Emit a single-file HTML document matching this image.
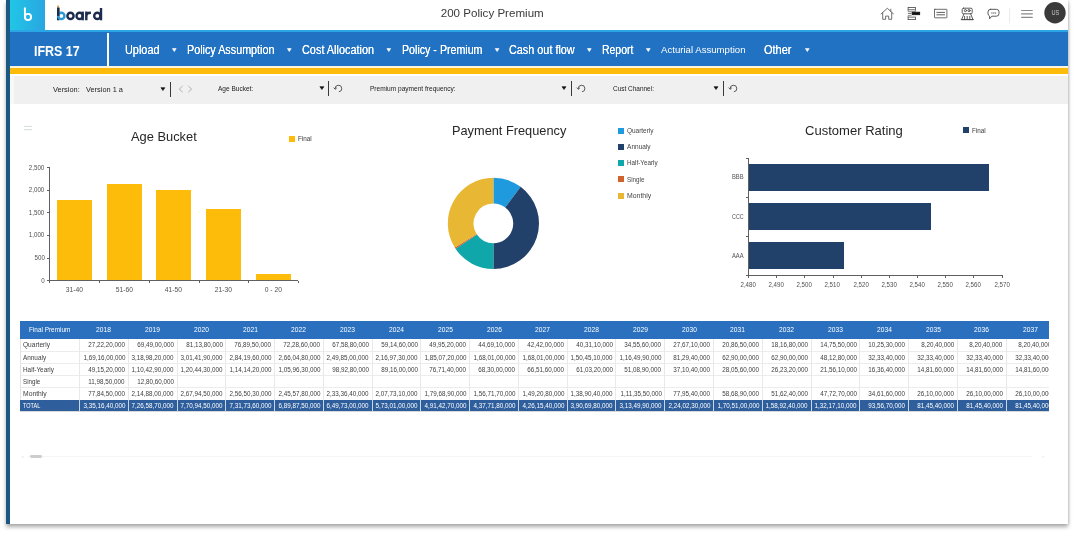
<!DOCTYPE html>
<html><head><meta charset="utf-8"><title>200 Policy Premium</title>
<style>
html,body{margin:0;padding:0;background:#fff;}
body{width:1074px;height:536px;overflow:hidden;position:relative;font-family:"Liberation Sans",sans-serif;}
.t{position:absolute;white-space:nowrap;display:block;}
.r{position:absolute;}
#card{position:absolute;left:6px;top:0;width:1062px;height:524px;background:#fff;box-shadow:0 3px 4px rgba(0,0,0,.33),1px 0 2px rgba(0,0,0,.10);}
svg{position:absolute;left:0;top:0;overflow:visible;}
</style></head><body>
<div id="card"></div>
<div id="page" style="position:absolute;left:0;top:0;width:1074px;height:536px;will-change:transform;">

<div class="r" style="left:6.2px;top:0px;width:3.7px;height:524px;background:#1c5982;"></div>
<div class="r" style="left:10px;top:0px;width:34.5px;height:30px;background:linear-gradient(90deg,#21c6e6,#29a6e1);"></div>
<div class="r" style="left:10px;top:29.5px;width:1058px;height:2.5px;background:#2aa5e6;"></div>
<div class="r" style="left:10px;top:32px;width:1058px;height:33.9px;background:#2272c3;"></div>
<div class="r" style="left:10px;top:66.2px;width:1058px;height:1.8px;background:#fdf6dc;"></div>
<div class="r" style="left:10px;top:67.8px;width:1058px;height:5.8px;background:#fdbb0c;"></div>
<div class="r" style="left:10px;top:75.5px;width:1058px;height:28.2px;background:#f8f8f8;"></div>
<div class="r" style="left:13.6px;top:75.5px;width:1054.4px;height:28.2px;background:#f0f0f0;"></div>
<div class="r" style="left:107px;top:33px;width:1.6px;height:33px;background:#fff;"></div>
<span class="t" style="left:442.26px;top:5.30px;font-size:11.3px;line-height:16px;color:#3a3a3a;transform:scaleX(1.0251);transform-origin:50% 50%;">200 Policy Premium</span>
<svg width="1074" height="536" viewBox="0 0 1074 536" fill="none" stroke-width="2.4" stroke-linecap="butt">
<g id="logo" stroke="#1d2b4d">
<path d="M58.2 7.6 V20.3"/>
<circle cx="61.3" cy="15.9" r="3.15" stroke="#2a9ad6"/>
<path d="M58.2 7.6 V15.9"/>
<circle cx="70.5" cy="15.9" r="3.1"/>
<circle cx="79.6" cy="15.9" r="3.1"/><path d="M82.7 11.6 V20.3"/>
<path d="M86.3 11.6 V20.3 M86.3 17.5 C86.3 13.2 87.4 12.8 90.9 12.8"/>
<circle cx="97.3" cy="15.9" r="3.1"/><path d="M101.0 8.0 V20.3"/>
</g>
<circle cx="58.1" cy="6.2" r="1.0" fill="#e9a23b" stroke="none"/>
<g id="tileb" stroke="#fff" stroke-width="1.9" stroke-linecap="round">
<path d="M24.9 8.2 V17"/>
<circle cx="28" cy="17" r="3.1"/>
</g>
</svg>
<svg width="1074" height="536" viewBox="0 0 1074 536" fill="none" stroke="#4a4a4a" stroke-width="0.8" stroke-linejoin="round" stroke-linecap="round">
<!-- home -->
<path d="M881.1 13.9 L887.3 8.3 L893.4 13.8 M882.7 12.8 V19.3 H885.6 V16.1 H888.7 V19.3 H891.7 V12.6 M890.8 11.2 V9.2"/>
<!-- hierarchy -->
<g stroke="#444" stroke-width="0.8" stroke-linejoin="miter" stroke-linecap="butt">
<rect x="908.1" y="7.4" width="7.4" height="2.4"/>
<path d="M908.1 9.8 V11.6 H915.5 V9.8" stroke="#777"/>
<rect x="908.1" y="17.1" width="7.4" height="2.5"/>
<path d="M908.1 17.1 V15.4 H911.6" stroke="#777"/>
<path d="M908 13.4 H911.6"/>
<rect x="912.2" y="12.2" width="7.5" height="2.5" fill="#111" stroke="#111"/>
</g>
<!-- card -->
<rect x="934.5" y="9.3" width="12.4" height="8.5" rx="0.4"/>
<path d="M936.8 12.4 H944.6 M936.8 14.8 H944.6" stroke-width="0.9"/>
<!-- people -->
<g stroke-width="0.9">
<rect x="962.2" y="8.2" width="10" height="5.6" rx="1.2"/>
<circle cx="965.4" cy="10.6" r="1.1"/><circle cx="969" cy="10.6" r="1.1"/>
<path d="M964 13.8 L961.6 19.6 H973 L970.6 13.8 M961.2 19.6 H973.4 M964.6 19.4 V16.4 M967.2 19.4 V16.4 M969.8 19.4 V16.4"/>
</g>
<!-- chat -->
<path d="M990.6 9.3 H996.4 Q999 9.3 999 11.8 V13.6 Q999 16.2 996.4 16.2 H991.8 L989.6 18.8 V16 Q988 15.4 988 13.6 V11.8 Q988 9.3 990.6 9.3 Z" stroke-width="0.9"/>
<path d="M991.6 13 H992.2 M993.4 13 H994 M995.2 13 H995.8" stroke-width="0.9"/>
<!-- sep -->
<path d="M1009.6 8.5 V23" stroke="#e4e4e4"/>
<!-- hamburger -->
<path d="M1021.6 10.5 H1032.3 M1021.6 13.9 H1032.3 M1021.6 17.4 H1032.3" stroke="#8a8a8a" stroke-width="1.1"/>
<circle cx="1055" cy="12.8" r="10.7" fill="#3a3a3a" stroke="none"/>
</svg>
<span class="t" style="left:1050.72px;top:8.30px;font-size:6.3px;line-height:10px;color:#c8c8c8;transform:scaleX(0.8912);transform-origin:50% 50%;">US</span>
<span class="t" style="left:34.20px;top:41.70px;font-size:13.8px;line-height:19px;color:#fff;font-weight:bold;transform:scaleX(0.9009);transform-origin:0 50%;">IFRS 17</span>
<span class="t" style="left:125.00px;top:41.80px;font-size:12px;line-height:16px;color:#fff;transform:scaleX(0.9072);transform-origin:0 50%;text-shadow:0 0 .5px #fff;">Upload</span>
<svg width="1074" height="536" viewBox="0 0 1074 536"><path fill="#fff" stroke="#fff" stroke-width="0.6" stroke-linejoin="round" d="M172.40 48.60 H176.20 L174.30 51.60 Z"/></svg>
<span class="t" style="left:187.00px;top:41.80px;font-size:12px;line-height:16px;color:#fff;transform:scaleX(0.8986);transform-origin:0 50%;text-shadow:0 0 .5px #fff;">Policy Assumption</span>
<svg width="1074" height="536" viewBox="0 0 1074 536"><path fill="#fff" stroke="#fff" stroke-width="0.6" stroke-linejoin="round" d="M287.40 48.60 H291.20 L289.30 51.60 Z"/></svg>
<span class="t" style="left:301.60px;top:41.80px;font-size:12px;line-height:16px;color:#fff;transform:scaleX(0.9083);transform-origin:0 50%;text-shadow:0 0 .5px #fff;">Cost Allocation</span>
<svg width="1074" height="536" viewBox="0 0 1074 536"><path fill="#fff" stroke="#fff" stroke-width="0.6" stroke-linejoin="round" d="M386.90 48.60 H390.70 L388.80 51.60 Z"/></svg>
<span class="t" style="left:401.50px;top:41.80px;font-size:12px;line-height:16px;color:#fff;transform:scaleX(0.8877);transform-origin:0 50%;text-shadow:0 0 .5px #fff;">Policy - Premium</span>
<svg width="1074" height="536" viewBox="0 0 1074 536"><path fill="#fff" stroke="#fff" stroke-width="0.6" stroke-linejoin="round" d="M495.20 48.60 H499.00 L497.10 51.60 Z"/></svg>
<span class="t" style="left:509.00px;top:41.80px;font-size:12px;line-height:16px;color:#fff;transform:scaleX(0.9037);transform-origin:0 50%;text-shadow:0 0 .5px #fff;">Cash out flow</span>
<svg width="1074" height="536" viewBox="0 0 1074 536"><path fill="#fff" stroke="#fff" stroke-width="0.6" stroke-linejoin="round" d="M587.40 48.60 H591.20 L589.30 51.60 Z"/></svg>
<span class="t" style="left:602.00px;top:41.80px;font-size:12px;line-height:16px;color:#fff;transform:scaleX(0.8718);transform-origin:0 50%;text-shadow:0 0 .5px #fff;">Report</span>
<svg width="1074" height="536" viewBox="0 0 1074 536"><path fill="#fff" stroke="#fff" stroke-width="0.6" stroke-linejoin="round" d="M646.40 48.60 H650.20 L648.30 51.60 Z"/></svg>
<span class="t" style="left:660.50px;top:43.00px;font-size:9.8px;line-height:14px;color:#fff;transform:scaleX(0.9819);transform-origin:0 50%;">Acturial Assumption</span>
<span class="t" style="left:764.40px;top:41.80px;font-size:12px;line-height:16px;color:#fff;transform:scaleX(0.9130);transform-origin:0 50%;text-shadow:0 0 .5px #fff;">Other</span>
<svg width="1074" height="536" viewBox="0 0 1074 536"><path fill="#fff" stroke="#fff" stroke-width="0.6" stroke-linejoin="round" d="M805.40 48.60 H809.20 L807.30 51.60 Z"/></svg>
<span class="t" style="left:52.80px;top:83.70px;font-size:7.8px;line-height:11px;color:#222;transform:scaleX(0.9474);transform-origin:0 50%;">Version:</span>
<span class="t" style="left:86.00px;top:83.70px;font-size:7.8px;line-height:11px;color:#222;transform:scaleX(0.9455);transform-origin:0 50%;">Version 1 a</span>
<span class="t" style="left:218.00px;top:83.60px;font-size:6.9px;line-height:10px;color:#222;transform:scaleX(0.9461);transform-origin:0 50%;">Age Bucket:</span>
<span class="t" style="left:370.00px;top:83.60px;font-size:6.9px;line-height:10px;color:#222;transform:scaleX(0.9509);transform-origin:0 50%;">Premium payment frequency:</span>
<span class="t" style="left:612.50px;top:83.60px;font-size:6.9px;line-height:10px;color:#222;transform:scaleX(0.9377);transform-origin:0 50%;">Cust Channel:</span>
<svg width="1074" height="536" viewBox="0 0 1074 536"><path fill="#111" stroke="#111" stroke-width="0.6" stroke-linejoin="round" d="M160.90 87.65 H164.90 L162.90 90.55 Z"/></svg>
<div class="r" style="left:170.15px;top:81.5px;width:0.9px;height:15.4px;background:#3a3a3a;"></div>
<svg width="1074" height="536" viewBox="0 0 1074 536"><path fill="#111" stroke="#111" stroke-width="0.6" stroke-linejoin="round" d="M319.90 86.65 H323.90 L321.90 89.55 Z"/></svg>
<div class="r" style="left:328.25px;top:80.5px;width:0.9px;height:15.4px;background:#3a3a3a;"></div>
<svg width="1074" height="536" viewBox="0 0 1074 536"><path fill="#111" stroke="#111" stroke-width="0.6" stroke-linejoin="round" d="M562.00 86.65 H566.00 L564.00 89.55 Z"/></svg>
<div class="r" style="left:571.05px;top:80.5px;width:0.9px;height:15.4px;background:#3a3a3a;"></div>
<svg width="1074" height="536" viewBox="0 0 1074 536"><path fill="#111" stroke="#111" stroke-width="0.6" stroke-linejoin="round" d="M714.00 86.65 H718.00 L716.00 89.55 Z"/></svg>
<div class="r" style="left:722.65px;top:80.5px;width:0.9px;height:15.4px;background:#3a3a3a;"></div>
<svg width="1074" height="536" viewBox="0 0 1074 536" fill="none" stroke="#a0a0a0" stroke-width="0.8"><path d="M182.6 86 L179.3 89.1 L182.6 92.2 M188.3 86 L191.6 89.1 L188.3 92.2"/></svg>
<svg width="1074" height="536" viewBox="0 0 1074 536" fill="none" stroke="#333" stroke-width="0.8"><path d="M335.2 88.8 A3.3 3.3 0 1 1 338.9 91.8"/><path d="M333.7 87.6 L335.2 89.3 L336.9 87.7"/></svg>
<svg width="1074" height="536" viewBox="0 0 1074 536" fill="none" stroke="#333" stroke-width="0.8"><path d="M578.3 88.8 A3.3 3.3 0 1 1 582.0 91.8"/><path d="M576.8 87.6 L578.3 89.3 L580.0 87.7"/></svg>
<svg width="1074" height="536" viewBox="0 0 1074 536" fill="none" stroke="#333" stroke-width="0.8"><path d="M730.2 88.8 A3.3 3.3 0 1 1 733.9 91.8"/><path d="M728.7 87.6 L730.2 89.3 L731.9 87.7"/></svg>
<svg width="1074" height="536" viewBox="0 0 1074 536" fill="none" stroke="#cdd8d5" stroke-width="0.9"><path d="M24.2 126.4H32.2M24.2 129.7H32.2"/></svg>
<span class="t" style="left:131.20px;top:128.20px;font-size:13.2px;line-height:18px;color:#262626;transform:scaleX(0.9747);transform-origin:0 50%;">Age Bucket</span>
<div class="r" style="left:288.5px;top:135.5px;width:6.1px;height:6.0px;background:#fdbb0c;"></div>
<span class="t" style="left:297.70px;top:133.80px;font-size:6.4px;line-height:10px;color:#383838;transform:scaleX(0.9876);transform-origin:0 50%;">Final</span>
<div class="r" style="left:49.2px;top:167.7px;width:0.8px;height:112.90000000000003px;background:#606060;"></div>
<div class="r" style="left:49.2px;top:280.20000000000005px;width:249.29999999999998px;height:0.8px;background:#606060;"></div>
<div class="r" style="left:47.0px;top:280.20000000000005px;width:2.6px;height:0.8px;background:#606060;"></div>
<span class="t" style="left:40.98px;top:275.60px;font-size:6.5px;line-height:10px;color:#505050;transform:scaleX(0.9500);transform-origin:100% 50%;">0</span>
<div class="r" style="left:47.0px;top:257.62000000000006px;width:2.6px;height:0.8px;background:#606060;"></div>
<span class="t" style="left:33.75px;top:253.02px;font-size:6.5px;line-height:10px;color:#505050;transform:scaleX(0.9500);transform-origin:100% 50%;">500</span>
<div class="r" style="left:47.0px;top:235.04px;width:2.6px;height:0.8px;background:#606060;"></div>
<span class="t" style="left:28.33px;top:230.44px;font-size:6.5px;line-height:10px;color:#505050;transform:scaleX(0.9500);transform-origin:100% 50%;">1,000</span>
<div class="r" style="left:47.0px;top:212.46px;width:2.6px;height:0.8px;background:#606060;"></div>
<span class="t" style="left:28.33px;top:207.86px;font-size:6.5px;line-height:10px;color:#505050;transform:scaleX(0.9500);transform-origin:100% 50%;">1,500</span>
<div class="r" style="left:47.0px;top:189.88px;width:2.6px;height:0.8px;background:#606060;"></div>
<span class="t" style="left:28.33px;top:185.28px;font-size:6.5px;line-height:10px;color:#505050;transform:scaleX(0.9500);transform-origin:100% 50%;">2,000</span>
<div class="r" style="left:47.0px;top:167.29999999999998px;width:2.6px;height:0.8px;background:#606060;"></div>
<span class="t" style="left:28.33px;top:162.70px;font-size:6.5px;line-height:10px;color:#505050;transform:scaleX(0.9500);transform-origin:100% 50%;">2,500</span>
<div class="r" style="left:56.6px;top:199.9px;width:35.199999999999996px;height:80.40000000000002px;background:#fdbb0a;"></div>
<span class="t" style="left:65.69px;top:285.10px;font-size:6.5px;line-height:10px;color:#505050;transform:scaleX(1.0400);transform-origin:50% 50%;">31-40</span>
<div class="r" style="left:106.6px;top:184.0px;width:35.20000000000002px;height:96.30000000000003px;background:#fdbb0a;"></div>
<span class="t" style="left:115.69px;top:285.10px;font-size:6.5px;line-height:10px;color:#505050;transform:scaleX(1.0400);transform-origin:50% 50%;">51-60</span>
<div class="r" style="left:156.2px;top:190.1px;width:35.10000000000002px;height:90.20000000000003px;background:#fdbb0a;"></div>
<span class="t" style="left:165.24px;top:285.10px;font-size:6.5px;line-height:10px;color:#505050;transform:scaleX(1.0400);transform-origin:50% 50%;">41-50</span>
<div class="r" style="left:205.8px;top:208.9px;width:35.19999999999999px;height:71.40000000000002px;background:#fdbb0a;"></div>
<span class="t" style="left:214.89px;top:285.10px;font-size:6.5px;line-height:10px;color:#505050;transform:scaleX(1.0400);transform-origin:50% 50%;">21-30</span>
<div class="r" style="left:255.8px;top:273.9px;width:34.80000000000001px;height:6.400000000000046px;background:#fdbb0a;"></div>
<span class="t" style="left:264.69px;top:285.10px;font-size:6.5px;line-height:10px;color:#505050;transform:scaleX(1.0400);transform-origin:50% 50%;">0 - 20</span>
<div class="r" style="left:49.2px;top:280.6px;width:0.8px;height:2.4px;background:#606060;"></div>
<div class="r" style="left:98.97999999999999px;top:280.6px;width:0.8px;height:2.4px;background:#606060;"></div>
<div class="r" style="left:148.76px;top:280.6px;width:0.8px;height:2.4px;background:#606060;"></div>
<div class="r" style="left:198.54px;top:280.6px;width:0.8px;height:2.4px;background:#606060;"></div>
<div class="r" style="left:248.32px;top:280.6px;width:0.8px;height:2.4px;background:#606060;"></div>
<div class="r" style="left:298.1px;top:280.6px;width:0.8px;height:2.4px;background:#606060;"></div>
<span class="t" style="left:452.00px;top:122.10px;font-size:13.2px;line-height:18px;color:#262626;transform:scaleX(0.9685);transform-origin:0 50%;">Payment Frequency</span>
<svg width="1074" height="536" viewBox="0 0 1074 536">
<path fill="#1f9ade" d="M493.40 177.80 A45.6 45.6 0 0 1 520.65 186.84 L505.23 207.52 A19.8 19.8 0 0 0 493.40 203.60 Z"/>
<path fill="#21406a" d="M520.65 186.84 A45.6 45.6 0 0 1 493.40 269.00 L493.40 243.20 A19.8 19.8 0 0 0 505.23 207.52 Z"/>
<path fill="#0fa7a9" d="M493.40 269.00 A45.6 45.6 0 0 1 455.51 248.77 L476.95 234.41 A19.8 19.8 0 0 0 493.40 243.20 Z"/>
<path fill="#d0622c" d="M455.51 248.77 A45.6 45.6 0 0 1 454.73 247.56 L476.61 233.89 A19.8 19.8 0 0 0 476.95 234.41 Z"/>
<path fill="#e8b733" d="M454.73 247.56 A45.6 45.6 0 0 1 493.40 177.80 L493.40 203.60 A19.8 19.8 0 0 0 476.61 233.89 Z"/>
</svg>
<div class="r" style="left:618.4px;top:127.6px;width:6.1px;height:6.0px;background:#1f9ade;"></div>
<span class="t" style="left:627.10px;top:125.70px;font-size:6.5px;line-height:10px;color:#444;transform:scaleX(0.9914);transform-origin:0 50%;">Quarterly</span>
<div class="r" style="left:618.4px;top:143.7px;width:6.1px;height:6.0px;background:#21406a;"></div>
<span class="t" style="left:627.10px;top:141.80px;font-size:6.5px;line-height:10px;color:#444;">Annualy</span>
<div class="r" style="left:618.4px;top:160.0px;width:6.1px;height:6.0px;background:#0fa7a9;"></div>
<span class="t" style="left:627.10px;top:158.10px;font-size:6.5px;line-height:10px;color:#444;transform:scaleX(0.9698);transform-origin:0 50%;">Half-Yearly</span>
<div class="r" style="left:618.4px;top:176.4px;width:6.1px;height:6.0px;background:#d0622c;"></div>
<span class="t" style="left:627.10px;top:174.50px;font-size:6.5px;line-height:10px;color:#444;transform:scaleX(0.9630);transform-origin:0 50%;">Single</span>
<div class="r" style="left:618.4px;top:192.7px;width:6.1px;height:6.0px;background:#e8b733;"></div>
<span class="t" style="left:627.10px;top:190.80px;font-size:6.5px;line-height:10px;color:#444;transform:scaleX(1.0589);transform-origin:0 50%;">Monthly</span>
<span class="t" style="left:804.90px;top:121.70px;font-size:13.2px;line-height:18px;color:#262626;transform:scaleX(0.9885);transform-origin:0 50%;">Customer Rating</span>
<div class="r" style="left:963.1px;top:127.4px;width:5.9px;height:5.8px;background:#21406a;"></div>
<span class="t" style="left:971.80px;top:125.60px;font-size:6.4px;line-height:10px;color:#383838;transform:scaleX(0.9804);transform-origin:0 50%;">Final</span>
<div class="r" style="left:748.0px;top:158.1px;width:0.8px;height:117.20000000000002px;background:#606060;"></div>
<div class="r" style="left:748.0px;top:274.9px;width:253.89999999999998px;height:0.8px;background:#606060;"></div>
<div class="r" style="left:748.8px;top:163.5px;width:240.6px;height:27.099999999999994px;background:#21406a;"></div>
<span class="t" style="left:730.59px;top:172.35px;font-size:6.3px;line-height:10px;color:#505050;transform:scaleX(0.9202);transform-origin:100% 50%;">BBB</span>
<div class="r" style="left:748.8px;top:202.8px;width:181.80000000000004px;height:27.399999999999977px;background:#21406a;"></div>
<span class="t" style="left:729.55px;top:211.80px;font-size:6.3px;line-height:10px;color:#505050;transform:scaleX(0.8499);transform-origin:100% 50%;">CCC</span>
<div class="r" style="left:748.8px;top:242px;width:95.40000000000006px;height:27.100000000000023px;background:#21406a;"></div>
<span class="t" style="left:730.59px;top:250.85px;font-size:6.3px;line-height:10px;color:#505050;transform:scaleX(0.9202);transform-origin:100% 50%;">AAA</span>
<div class="r" style="left:746.0px;top:157.7px;width:2.4px;height:0.8px;background:#606060;"></div>
<div class="r" style="left:746.0px;top:196.6px;width:2.4px;height:0.8px;background:#606060;"></div>
<div class="r" style="left:746.0px;top:235.6px;width:2.4px;height:0.8px;background:#606060;"></div>
<div class="r" style="left:746.0px;top:274.90000000000003px;width:2.4px;height:0.8px;background:#606060;"></div>
<div class="r" style="left:748.0px;top:275.3px;width:0.8px;height:2.4px;background:#606060;"></div>
<span class="t" style="left:739.97px;top:279.50px;font-size:6.5px;line-height:10px;color:#505050;transform:scaleX(0.9406);transform-origin:50% 50%;">2,480</span>
<div class="r" style="left:776.17px;top:275.3px;width:0.8px;height:2.4px;background:#606060;"></div>
<span class="t" style="left:768.14px;top:279.50px;font-size:6.5px;line-height:10px;color:#505050;transform:scaleX(0.9406);transform-origin:50% 50%;">2,490</span>
<div class="r" style="left:804.34px;top:275.3px;width:0.8px;height:2.4px;background:#606060;"></div>
<span class="t" style="left:796.31px;top:279.50px;font-size:6.5px;line-height:10px;color:#505050;transform:scaleX(0.9406);transform-origin:50% 50%;">2,500</span>
<div class="r" style="left:832.51px;top:275.3px;width:0.8px;height:2.4px;background:#606060;"></div>
<span class="t" style="left:824.48px;top:279.50px;font-size:6.5px;line-height:10px;color:#505050;transform:scaleX(0.9406);transform-origin:50% 50%;">2,510</span>
<div class="r" style="left:860.68px;top:275.3px;width:0.8px;height:2.4px;background:#606060;"></div>
<span class="t" style="left:852.65px;top:279.50px;font-size:6.5px;line-height:10px;color:#505050;transform:scaleX(0.9406);transform-origin:50% 50%;">2,520</span>
<div class="r" style="left:888.85px;top:275.3px;width:0.8px;height:2.4px;background:#606060;"></div>
<span class="t" style="left:880.82px;top:279.50px;font-size:6.5px;line-height:10px;color:#505050;transform:scaleX(0.9406);transform-origin:50% 50%;">2,530</span>
<div class="r" style="left:917.02px;top:275.3px;width:0.8px;height:2.4px;background:#606060;"></div>
<span class="t" style="left:908.99px;top:279.50px;font-size:6.5px;line-height:10px;color:#505050;transform:scaleX(0.9406);transform-origin:50% 50%;">2,540</span>
<div class="r" style="left:945.1899999999999px;top:275.3px;width:0.8px;height:2.4px;background:#606060;"></div>
<span class="t" style="left:937.16px;top:279.50px;font-size:6.5px;line-height:10px;color:#505050;transform:scaleX(0.9406);transform-origin:50% 50%;">2,550</span>
<div class="r" style="left:973.36px;top:275.3px;width:0.8px;height:2.4px;background:#606060;"></div>
<span class="t" style="left:965.33px;top:279.50px;font-size:6.5px;line-height:10px;color:#505050;transform:scaleX(0.9406);transform-origin:50% 50%;">2,560</span>
<div class="r" style="left:1001.5300000000001px;top:275.3px;width:0.8px;height:2.4px;background:#606060;"></div>
<span class="t" style="left:993.50px;top:279.50px;font-size:6.5px;line-height:10px;color:#505050;transform:scaleX(0.9406);transform-origin:50% 50%;">2,570</span>
<div class="r" style="left:20.2px;top:320.5px;width:1029.1px;height:91.10000000000002px;overflow:hidden;">
<div class="r" style="left:0.00px;top:0.00px;width:1029.10px;height:18.40px;background:#2a70be;"></div>
<div class="r" style="left:0.00px;top:79.30px;width:1029.10px;height:11.80px;background:#2e5e9c;"></div>
<div class="r" style="left:0.00px;top:30.30px;width:1029.10px;height:0.80px;background:#ececec;"></div>
<div class="r" style="left:0.00px;top:42.50px;width:1029.10px;height:0.80px;background:#ececec;"></div>
<div class="r" style="left:0.00px;top:54.50px;width:1029.10px;height:0.80px;background:#ececec;"></div>
<div class="r" style="left:0.00px;top:66.60px;width:1029.10px;height:0.80px;background:#ececec;"></div>
<div class="r" style="left:0.00px;top:90.30px;width:1029.10px;height:0.80px;background:#d8d8d8;"></div>
<div class="r" style="left:58.80px;top:18.40px;width:0.80px;height:60.90px;background:#e9e9e9;"></div>
<div class="r" style="left:58.80px;top:79.30px;width:0.90px;height:11.80px;background:#c9d6e6;"></div>
<div class="r" style="left:107.57px;top:18.40px;width:0.80px;height:60.90px;background:#e9e9e9;"></div>
<div class="r" style="left:107.57px;top:79.30px;width:0.90px;height:11.80px;background:#c9d6e6;"></div>
<div class="r" style="left:156.34px;top:18.40px;width:0.80px;height:60.90px;background:#e9e9e9;"></div>
<div class="r" style="left:156.34px;top:79.30px;width:0.90px;height:11.80px;background:#c9d6e6;"></div>
<div class="r" style="left:205.11px;top:18.40px;width:0.80px;height:60.90px;background:#e9e9e9;"></div>
<div class="r" style="left:205.11px;top:79.30px;width:0.90px;height:11.80px;background:#c9d6e6;"></div>
<div class="r" style="left:253.88px;top:18.40px;width:0.80px;height:60.90px;background:#e9e9e9;"></div>
<div class="r" style="left:253.88px;top:79.30px;width:0.90px;height:11.80px;background:#c9d6e6;"></div>
<div class="r" style="left:302.65px;top:18.40px;width:0.80px;height:60.90px;background:#e9e9e9;"></div>
<div class="r" style="left:302.65px;top:79.30px;width:0.90px;height:11.80px;background:#c9d6e6;"></div>
<div class="r" style="left:351.42px;top:18.40px;width:0.80px;height:60.90px;background:#e9e9e9;"></div>
<div class="r" style="left:351.42px;top:79.30px;width:0.90px;height:11.80px;background:#c9d6e6;"></div>
<div class="r" style="left:400.19px;top:18.40px;width:0.80px;height:60.90px;background:#e9e9e9;"></div>
<div class="r" style="left:400.19px;top:79.30px;width:0.90px;height:11.80px;background:#c9d6e6;"></div>
<div class="r" style="left:448.96px;top:18.40px;width:0.80px;height:60.90px;background:#e9e9e9;"></div>
<div class="r" style="left:448.96px;top:79.30px;width:0.90px;height:11.80px;background:#c9d6e6;"></div>
<div class="r" style="left:497.73px;top:18.40px;width:0.80px;height:60.90px;background:#e9e9e9;"></div>
<div class="r" style="left:497.73px;top:79.30px;width:0.90px;height:11.80px;background:#c9d6e6;"></div>
<div class="r" style="left:546.50px;top:18.40px;width:0.80px;height:60.90px;background:#e9e9e9;"></div>
<div class="r" style="left:546.50px;top:79.30px;width:0.90px;height:11.80px;background:#c9d6e6;"></div>
<div class="r" style="left:595.27px;top:18.40px;width:0.80px;height:60.90px;background:#e9e9e9;"></div>
<div class="r" style="left:595.27px;top:79.30px;width:0.90px;height:11.80px;background:#c9d6e6;"></div>
<div class="r" style="left:644.04px;top:18.40px;width:0.80px;height:60.90px;background:#e9e9e9;"></div>
<div class="r" style="left:644.04px;top:79.30px;width:0.90px;height:11.80px;background:#c9d6e6;"></div>
<div class="r" style="left:692.81px;top:18.40px;width:0.80px;height:60.90px;background:#e9e9e9;"></div>
<div class="r" style="left:692.81px;top:79.30px;width:0.90px;height:11.80px;background:#c9d6e6;"></div>
<div class="r" style="left:741.58px;top:18.40px;width:0.80px;height:60.90px;background:#e9e9e9;"></div>
<div class="r" style="left:741.58px;top:79.30px;width:0.90px;height:11.80px;background:#c9d6e6;"></div>
<div class="r" style="left:790.35px;top:18.40px;width:0.80px;height:60.90px;background:#e9e9e9;"></div>
<div class="r" style="left:790.35px;top:79.30px;width:0.90px;height:11.80px;background:#c9d6e6;"></div>
<div class="r" style="left:839.12px;top:18.40px;width:0.80px;height:60.90px;background:#e9e9e9;"></div>
<div class="r" style="left:839.12px;top:79.30px;width:0.90px;height:11.80px;background:#c9d6e6;"></div>
<div class="r" style="left:887.89px;top:18.40px;width:0.80px;height:60.90px;background:#e9e9e9;"></div>
<div class="r" style="left:887.89px;top:79.30px;width:0.90px;height:11.80px;background:#c9d6e6;"></div>
<div class="r" style="left:936.66px;top:18.40px;width:0.80px;height:60.90px;background:#e9e9e9;"></div>
<div class="r" style="left:936.66px;top:79.30px;width:0.90px;height:11.80px;background:#c9d6e6;"></div>
<div class="r" style="left:985.43px;top:18.40px;width:0.80px;height:60.90px;background:#e9e9e9;"></div>
<div class="r" style="left:985.43px;top:79.30px;width:0.90px;height:11.80px;background:#c9d6e6;"></div>
<div class="r" style="left:0.00px;top:18.40px;width:0.80px;height:60.90px;background:#e3e3e3;"></div>
</div>
<div class="r" style="left:20.2px;top:320.5px;width:1029.1px;height:91.10000000000002px;overflow:hidden;">
<span class="t" style="left:8.90px;top:4.90px;font-size:6.7px;line-height:10px;color:#fff;transform:scaleX(0.9586);transform-origin:0 50%;">Final Premium</span>
<span class="t" style="left:76.23px;top:4.90px;font-size:6.7px;line-height:10px;color:#fff;transform:scaleX(0.9930);transform-origin:50% 50%;">2018</span>
<span class="t" style="left:125.00px;top:4.90px;font-size:6.7px;line-height:10px;color:#fff;transform:scaleX(0.9930);transform-origin:50% 50%;">2019</span>
<span class="t" style="left:173.77px;top:4.90px;font-size:6.7px;line-height:10px;color:#fff;transform:scaleX(0.9930);transform-origin:50% 50%;">2020</span>
<span class="t" style="left:222.54px;top:4.90px;font-size:6.7px;line-height:10px;color:#fff;transform:scaleX(0.9930);transform-origin:50% 50%;">2021</span>
<span class="t" style="left:271.31px;top:4.90px;font-size:6.7px;line-height:10px;color:#fff;transform:scaleX(0.9930);transform-origin:50% 50%;">2022</span>
<span class="t" style="left:320.08px;top:4.90px;font-size:6.7px;line-height:10px;color:#fff;transform:scaleX(0.9930);transform-origin:50% 50%;">2023</span>
<span class="t" style="left:368.85px;top:4.90px;font-size:6.7px;line-height:10px;color:#fff;transform:scaleX(0.9930);transform-origin:50% 50%;">2024</span>
<span class="t" style="left:417.62px;top:4.90px;font-size:6.7px;line-height:10px;color:#fff;transform:scaleX(0.9930);transform-origin:50% 50%;">2025</span>
<span class="t" style="left:466.39px;top:4.90px;font-size:6.7px;line-height:10px;color:#fff;transform:scaleX(0.9930);transform-origin:50% 50%;">2026</span>
<span class="t" style="left:515.16px;top:4.90px;font-size:6.7px;line-height:10px;color:#fff;transform:scaleX(0.9930);transform-origin:50% 50%;">2027</span>
<span class="t" style="left:563.93px;top:4.90px;font-size:6.7px;line-height:10px;color:#fff;transform:scaleX(0.9930);transform-origin:50% 50%;">2028</span>
<span class="t" style="left:612.70px;top:4.90px;font-size:6.7px;line-height:10px;color:#fff;transform:scaleX(0.9930);transform-origin:50% 50%;">2029</span>
<span class="t" style="left:661.47px;top:4.90px;font-size:6.7px;line-height:10px;color:#fff;transform:scaleX(0.9930);transform-origin:50% 50%;">2030</span>
<span class="t" style="left:710.24px;top:4.90px;font-size:6.7px;line-height:10px;color:#fff;transform:scaleX(0.9930);transform-origin:50% 50%;">2031</span>
<span class="t" style="left:759.01px;top:4.90px;font-size:6.7px;line-height:10px;color:#fff;transform:scaleX(0.9930);transform-origin:50% 50%;">2032</span>
<span class="t" style="left:807.78px;top:4.90px;font-size:6.7px;line-height:10px;color:#fff;transform:scaleX(0.9930);transform-origin:50% 50%;">2033</span>
<span class="t" style="left:856.55px;top:4.90px;font-size:6.7px;line-height:10px;color:#fff;transform:scaleX(0.9930);transform-origin:50% 50%;">2034</span>
<span class="t" style="left:905.32px;top:4.90px;font-size:6.7px;line-height:10px;color:#fff;transform:scaleX(0.9930);transform-origin:50% 50%;">2035</span>
<span class="t" style="left:954.09px;top:4.90px;font-size:6.7px;line-height:10px;color:#fff;transform:scaleX(0.9930);transform-origin:50% 50%;">2036</span>
<span class="t" style="left:1002.86px;top:4.90px;font-size:6.7px;line-height:10px;color:#fff;transform:scaleX(0.9930);transform-origin:50% 50%;">2037</span>
<span class="t" style="left:3.00px;top:19.95px;font-size:6.5px;line-height:10px;color:#404040;transform:scaleX(1.0101);transform-origin:0 50%;">Quarterly</span>
<span class="t" style="left:66.82px;top:19.95px;font-size:6.5px;line-height:10px;color:#404040;transform:scaleX(0.9666);transform-origin:100% 50%;">27,22,20,000</span>
<span class="t" style="left:115.59px;top:19.95px;font-size:6.5px;line-height:10px;color:#404040;transform:scaleX(0.9666);transform-origin:100% 50%;">69,49,00,000</span>
<span class="t" style="left:164.36px;top:19.95px;font-size:6.5px;line-height:10px;color:#404040;transform:scaleX(0.9666);transform-origin:100% 50%;">81,13,80,000</span>
<span class="t" style="left:213.13px;top:19.95px;font-size:6.5px;line-height:10px;color:#404040;transform:scaleX(0.9666);transform-origin:100% 50%;">76,89,50,000</span>
<span class="t" style="left:261.90px;top:19.95px;font-size:6.5px;line-height:10px;color:#404040;transform:scaleX(0.9666);transform-origin:100% 50%;">72,28,60,000</span>
<span class="t" style="left:310.67px;top:19.95px;font-size:6.5px;line-height:10px;color:#404040;transform:scaleX(0.9666);transform-origin:100% 50%;">67,58,80,000</span>
<span class="t" style="left:359.44px;top:19.95px;font-size:6.5px;line-height:10px;color:#404040;transform:scaleX(0.9666);transform-origin:100% 50%;">59,14,60,000</span>
<span class="t" style="left:408.21px;top:19.95px;font-size:6.5px;line-height:10px;color:#404040;transform:scaleX(0.9666);transform-origin:100% 50%;">49,95,20,000</span>
<span class="t" style="left:456.98px;top:19.95px;font-size:6.5px;line-height:10px;color:#404040;transform:scaleX(0.9666);transform-origin:100% 50%;">44,69,10,000</span>
<span class="t" style="left:505.75px;top:19.95px;font-size:6.5px;line-height:10px;color:#404040;transform:scaleX(0.9666);transform-origin:100% 50%;">42,42,00,000</span>
<span class="t" style="left:554.52px;top:19.95px;font-size:6.5px;line-height:10px;color:#404040;transform:scaleX(0.9666);transform-origin:100% 50%;">40,31,10,000</span>
<span class="t" style="left:603.29px;top:19.95px;font-size:6.5px;line-height:10px;color:#404040;transform:scaleX(0.9666);transform-origin:100% 50%;">34,55,60,000</span>
<span class="t" style="left:652.06px;top:19.95px;font-size:6.5px;line-height:10px;color:#404040;transform:scaleX(0.9666);transform-origin:100% 50%;">27,67,10,000</span>
<span class="t" style="left:700.83px;top:19.95px;font-size:6.5px;line-height:10px;color:#404040;transform:scaleX(0.9666);transform-origin:100% 50%;">20,86,50,000</span>
<span class="t" style="left:749.60px;top:19.95px;font-size:6.5px;line-height:10px;color:#404040;transform:scaleX(0.9666);transform-origin:100% 50%;">18,16,80,000</span>
<span class="t" style="left:798.37px;top:19.95px;font-size:6.5px;line-height:10px;color:#404040;transform:scaleX(0.9666);transform-origin:100% 50%;">14,75,50,000</span>
<span class="t" style="left:847.14px;top:19.95px;font-size:6.5px;line-height:10px;color:#404040;transform:scaleX(0.9666);transform-origin:100% 50%;">10,25,30,000</span>
<span class="t" style="left:899.52px;top:19.95px;font-size:6.5px;line-height:10px;color:#404040;transform:scaleX(0.9666);transform-origin:100% 50%;">8,20,40,000</span>
<span class="t" style="left:948.29px;top:19.95px;font-size:6.5px;line-height:10px;color:#404040;transform:scaleX(0.9666);transform-origin:100% 50%;">8,20,40,000</span>
<span class="t" style="left:997.06px;top:19.95px;font-size:6.5px;line-height:10px;color:#404040;transform:scaleX(0.9666);transform-origin:100% 50%;">8,20,40,000</span>
<span class="t" style="left:3.00px;top:32.20px;font-size:6.5px;line-height:10px;color:#404040;transform:scaleX(0.9834);transform-origin:0 50%;">Annualy</span>
<span class="t" style="left:61.40px;top:32.20px;font-size:6.5px;line-height:10px;color:#404040;transform:scaleX(0.9666);transform-origin:100% 50%;">1,69,16,00,000</span>
<span class="t" style="left:110.17px;top:32.20px;font-size:6.5px;line-height:10px;color:#404040;transform:scaleX(0.9666);transform-origin:100% 50%;">3,18,98,20,000</span>
<span class="t" style="left:158.94px;top:32.20px;font-size:6.5px;line-height:10px;color:#404040;transform:scaleX(0.9666);transform-origin:100% 50%;">3,01,41,90,000</span>
<span class="t" style="left:207.71px;top:32.20px;font-size:6.5px;line-height:10px;color:#404040;transform:scaleX(0.9666);transform-origin:100% 50%;">2,84,19,60,000</span>
<span class="t" style="left:256.48px;top:32.20px;font-size:6.5px;line-height:10px;color:#404040;transform:scaleX(0.9666);transform-origin:100% 50%;">2,66,04,80,000</span>
<span class="t" style="left:305.25px;top:32.20px;font-size:6.5px;line-height:10px;color:#404040;transform:scaleX(0.9666);transform-origin:100% 50%;">2,49,85,00,000</span>
<span class="t" style="left:354.02px;top:32.20px;font-size:6.5px;line-height:10px;color:#404040;transform:scaleX(0.9666);transform-origin:100% 50%;">2,16,97,30,000</span>
<span class="t" style="left:402.79px;top:32.20px;font-size:6.5px;line-height:10px;color:#404040;transform:scaleX(0.9666);transform-origin:100% 50%;">1,85,07,20,000</span>
<span class="t" style="left:451.56px;top:32.20px;font-size:6.5px;line-height:10px;color:#404040;transform:scaleX(0.9666);transform-origin:100% 50%;">1,68,01,00,000</span>
<span class="t" style="left:500.33px;top:32.20px;font-size:6.5px;line-height:10px;color:#404040;transform:scaleX(0.9666);transform-origin:100% 50%;">1,68,01,00,000</span>
<span class="t" style="left:549.10px;top:32.20px;font-size:6.5px;line-height:10px;color:#404040;transform:scaleX(0.9666);transform-origin:100% 50%;">1,50,45,10,000</span>
<span class="t" style="left:597.87px;top:32.20px;font-size:6.5px;line-height:10px;color:#404040;transform:scaleX(0.9666);transform-origin:100% 50%;">1,16,49,90,000</span>
<span class="t" style="left:652.06px;top:32.20px;font-size:6.5px;line-height:10px;color:#404040;transform:scaleX(0.9666);transform-origin:100% 50%;">81,29,40,000</span>
<span class="t" style="left:700.83px;top:32.20px;font-size:6.5px;line-height:10px;color:#404040;transform:scaleX(0.9666);transform-origin:100% 50%;">62,90,00,000</span>
<span class="t" style="left:749.60px;top:32.20px;font-size:6.5px;line-height:10px;color:#404040;transform:scaleX(0.9666);transform-origin:100% 50%;">62,90,00,000</span>
<span class="t" style="left:798.37px;top:32.20px;font-size:6.5px;line-height:10px;color:#404040;transform:scaleX(0.9666);transform-origin:100% 50%;">48,12,80,000</span>
<span class="t" style="left:847.14px;top:32.20px;font-size:6.5px;line-height:10px;color:#404040;transform:scaleX(0.9666);transform-origin:100% 50%;">32,33,40,000</span>
<span class="t" style="left:895.91px;top:32.20px;font-size:6.5px;line-height:10px;color:#404040;transform:scaleX(0.9666);transform-origin:100% 50%;">32,33,40,000</span>
<span class="t" style="left:944.68px;top:32.20px;font-size:6.5px;line-height:10px;color:#404040;transform:scaleX(0.9666);transform-origin:100% 50%;">32,33,40,000</span>
<span class="t" style="left:993.45px;top:32.20px;font-size:6.5px;line-height:10px;color:#404040;transform:scaleX(0.9666);transform-origin:100% 50%;">32,33,40,000</span>
<span class="t" style="left:3.00px;top:44.30px;font-size:6.5px;line-height:10px;color:#404040;transform:scaleX(0.9794);transform-origin:0 50%;">Half-Yearly</span>
<span class="t" style="left:66.82px;top:44.30px;font-size:6.5px;line-height:10px;color:#404040;transform:scaleX(0.9666);transform-origin:100% 50%;">49,15,20,000</span>
<span class="t" style="left:110.17px;top:44.30px;font-size:6.5px;line-height:10px;color:#404040;transform:scaleX(0.9666);transform-origin:100% 50%;">1,10,42,90,000</span>
<span class="t" style="left:158.94px;top:44.30px;font-size:6.5px;line-height:10px;color:#404040;transform:scaleX(0.9666);transform-origin:100% 50%;">1,20,44,30,000</span>
<span class="t" style="left:207.71px;top:44.30px;font-size:6.5px;line-height:10px;color:#404040;transform:scaleX(0.9666);transform-origin:100% 50%;">1,14,14,20,000</span>
<span class="t" style="left:256.48px;top:44.30px;font-size:6.5px;line-height:10px;color:#404040;transform:scaleX(0.9666);transform-origin:100% 50%;">1,05,96,30,000</span>
<span class="t" style="left:310.67px;top:44.30px;font-size:6.5px;line-height:10px;color:#404040;transform:scaleX(0.9666);transform-origin:100% 50%;">98,92,80,000</span>
<span class="t" style="left:359.44px;top:44.30px;font-size:6.5px;line-height:10px;color:#404040;transform:scaleX(0.9666);transform-origin:100% 50%;">89,16,00,000</span>
<span class="t" style="left:408.21px;top:44.30px;font-size:6.5px;line-height:10px;color:#404040;transform:scaleX(0.9666);transform-origin:100% 50%;">76,71,40,000</span>
<span class="t" style="left:456.98px;top:44.30px;font-size:6.5px;line-height:10px;color:#404040;transform:scaleX(0.9666);transform-origin:100% 50%;">68,30,00,000</span>
<span class="t" style="left:505.75px;top:44.30px;font-size:6.5px;line-height:10px;color:#404040;transform:scaleX(0.9666);transform-origin:100% 50%;">66,51,60,000</span>
<span class="t" style="left:554.52px;top:44.30px;font-size:6.5px;line-height:10px;color:#404040;transform:scaleX(0.9666);transform-origin:100% 50%;">61,03,20,000</span>
<span class="t" style="left:603.29px;top:44.30px;font-size:6.5px;line-height:10px;color:#404040;transform:scaleX(0.9666);transform-origin:100% 50%;">51,08,90,000</span>
<span class="t" style="left:652.06px;top:44.30px;font-size:6.5px;line-height:10px;color:#404040;transform:scaleX(0.9666);transform-origin:100% 50%;">37,10,40,000</span>
<span class="t" style="left:700.83px;top:44.30px;font-size:6.5px;line-height:10px;color:#404040;transform:scaleX(0.9666);transform-origin:100% 50%;">28,05,60,000</span>
<span class="t" style="left:749.60px;top:44.30px;font-size:6.5px;line-height:10px;color:#404040;transform:scaleX(0.9666);transform-origin:100% 50%;">26,23,20,000</span>
<span class="t" style="left:798.37px;top:44.30px;font-size:6.5px;line-height:10px;color:#404040;transform:scaleX(0.9666);transform-origin:100% 50%;">21,56,10,000</span>
<span class="t" style="left:847.14px;top:44.30px;font-size:6.5px;line-height:10px;color:#404040;transform:scaleX(0.9666);transform-origin:100% 50%;">16,36,40,000</span>
<span class="t" style="left:895.91px;top:44.30px;font-size:6.5px;line-height:10px;color:#404040;transform:scaleX(0.9666);transform-origin:100% 50%;">14,81,60,000</span>
<span class="t" style="left:944.68px;top:44.30px;font-size:6.5px;line-height:10px;color:#404040;transform:scaleX(0.9666);transform-origin:100% 50%;">14,81,60,000</span>
<span class="t" style="left:993.45px;top:44.30px;font-size:6.5px;line-height:10px;color:#404040;transform:scaleX(0.9666);transform-origin:100% 50%;">14,81,60,000</span>
<span class="t" style="left:3.00px;top:56.35px;font-size:6.5px;line-height:10px;color:#404040;transform:scaleX(0.9519);transform-origin:0 50%;">Single</span>
<span class="t" style="left:67.30px;top:56.35px;font-size:6.5px;line-height:10px;color:#404040;transform:scaleX(0.9666);transform-origin:100% 50%;">11,98,50,000</span>
<span class="t" style="left:115.59px;top:56.35px;font-size:6.5px;line-height:10px;color:#404040;transform:scaleX(0.9666);transform-origin:100% 50%;">12,80,60,000</span>
<span class="t" style="left:3.00px;top:68.55px;font-size:6.5px;line-height:10px;color:#404040;transform:scaleX(1.0413);transform-origin:0 50%;">Monthly</span>
<span class="t" style="left:66.82px;top:68.55px;font-size:6.5px;line-height:10px;color:#404040;transform:scaleX(0.9666);transform-origin:100% 50%;">77,84,50,000</span>
<span class="t" style="left:110.17px;top:68.55px;font-size:6.5px;line-height:10px;color:#404040;transform:scaleX(0.9666);transform-origin:100% 50%;">2,14,88,00,000</span>
<span class="t" style="left:158.94px;top:68.55px;font-size:6.5px;line-height:10px;color:#404040;transform:scaleX(0.9666);transform-origin:100% 50%;">2,67,94,50,000</span>
<span class="t" style="left:207.71px;top:68.55px;font-size:6.5px;line-height:10px;color:#404040;transform:scaleX(0.9666);transform-origin:100% 50%;">2,56,50,30,000</span>
<span class="t" style="left:256.48px;top:68.55px;font-size:6.5px;line-height:10px;color:#404040;transform:scaleX(0.9666);transform-origin:100% 50%;">2,45,57,80,000</span>
<span class="t" style="left:305.25px;top:68.55px;font-size:6.5px;line-height:10px;color:#404040;transform:scaleX(0.9666);transform-origin:100% 50%;">2,33,36,40,000</span>
<span class="t" style="left:354.02px;top:68.55px;font-size:6.5px;line-height:10px;color:#404040;transform:scaleX(0.9666);transform-origin:100% 50%;">2,07,73,10,000</span>
<span class="t" style="left:402.79px;top:68.55px;font-size:6.5px;line-height:10px;color:#404040;transform:scaleX(0.9666);transform-origin:100% 50%;">1,79,68,90,000</span>
<span class="t" style="left:451.56px;top:68.55px;font-size:6.5px;line-height:10px;color:#404040;transform:scaleX(0.9666);transform-origin:100% 50%;">1,56,71,70,000</span>
<span class="t" style="left:500.33px;top:68.55px;font-size:6.5px;line-height:10px;color:#404040;transform:scaleX(0.9666);transform-origin:100% 50%;">1,49,20,80,000</span>
<span class="t" style="left:549.10px;top:68.55px;font-size:6.5px;line-height:10px;color:#404040;transform:scaleX(0.9666);transform-origin:100% 50%;">1,38,90,40,000</span>
<span class="t" style="left:598.35px;top:68.55px;font-size:6.5px;line-height:10px;color:#404040;transform:scaleX(0.9666);transform-origin:100% 50%;">1,11,35,50,000</span>
<span class="t" style="left:652.06px;top:68.55px;font-size:6.5px;line-height:10px;color:#404040;transform:scaleX(0.9666);transform-origin:100% 50%;">77,95,40,000</span>
<span class="t" style="left:700.83px;top:68.55px;font-size:6.5px;line-height:10px;color:#404040;transform:scaleX(0.9666);transform-origin:100% 50%;">58,68,90,000</span>
<span class="t" style="left:749.60px;top:68.55px;font-size:6.5px;line-height:10px;color:#404040;transform:scaleX(0.9666);transform-origin:100% 50%;">51,62,40,000</span>
<span class="t" style="left:798.37px;top:68.55px;font-size:6.5px;line-height:10px;color:#404040;transform:scaleX(0.9666);transform-origin:100% 50%;">47,72,70,000</span>
<span class="t" style="left:847.14px;top:68.55px;font-size:6.5px;line-height:10px;color:#404040;transform:scaleX(0.9666);transform-origin:100% 50%;">34,61,60,000</span>
<span class="t" style="left:895.91px;top:68.55px;font-size:6.5px;line-height:10px;color:#404040;transform:scaleX(0.9666);transform-origin:100% 50%;">26,10,00,000</span>
<span class="t" style="left:944.68px;top:68.55px;font-size:6.5px;line-height:10px;color:#404040;transform:scaleX(0.9666);transform-origin:100% 50%;">26,10,00,000</span>
<span class="t" style="left:993.45px;top:68.55px;font-size:6.5px;line-height:10px;color:#404040;transform:scaleX(0.9666);transform-origin:100% 50%;">26,10,00,000</span>
<span class="t" style="left:3.00px;top:80.60px;font-size:6.5px;line-height:10px;color:#fff;transform:scaleX(0.8453);transform-origin:0 50%;">TOTAL</span>
<span class="t" style="left:61.40px;top:80.60px;font-size:6.5px;line-height:10px;color:#fff;transform:scaleX(0.9666);transform-origin:100% 50%;">3,35,16,40,000</span>
<span class="t" style="left:110.17px;top:80.60px;font-size:6.5px;line-height:10px;color:#fff;transform:scaleX(0.9666);transform-origin:100% 50%;">7,26,58,70,000</span>
<span class="t" style="left:158.94px;top:80.60px;font-size:6.5px;line-height:10px;color:#fff;transform:scaleX(0.9666);transform-origin:100% 50%;">7,70,94,50,000</span>
<span class="t" style="left:207.71px;top:80.60px;font-size:6.5px;line-height:10px;color:#fff;transform:scaleX(0.9666);transform-origin:100% 50%;">7,31,73,60,000</span>
<span class="t" style="left:256.48px;top:80.60px;font-size:6.5px;line-height:10px;color:#fff;transform:scaleX(0.9666);transform-origin:100% 50%;">6,89,87,50,000</span>
<span class="t" style="left:305.25px;top:80.60px;font-size:6.5px;line-height:10px;color:#fff;transform:scaleX(0.9666);transform-origin:100% 50%;">6,49,73,00,000</span>
<span class="t" style="left:354.02px;top:80.60px;font-size:6.5px;line-height:10px;color:#fff;transform:scaleX(0.9666);transform-origin:100% 50%;">5,73,01,00,000</span>
<span class="t" style="left:402.79px;top:80.60px;font-size:6.5px;line-height:10px;color:#fff;transform:scaleX(0.9666);transform-origin:100% 50%;">4,91,42,70,000</span>
<span class="t" style="left:451.56px;top:80.60px;font-size:6.5px;line-height:10px;color:#fff;transform:scaleX(0.9666);transform-origin:100% 50%;">4,37,71,80,000</span>
<span class="t" style="left:500.33px;top:80.60px;font-size:6.5px;line-height:10px;color:#fff;transform:scaleX(0.9666);transform-origin:100% 50%;">4,26,15,40,000</span>
<span class="t" style="left:549.10px;top:80.60px;font-size:6.5px;line-height:10px;color:#fff;transform:scaleX(0.9666);transform-origin:100% 50%;">3,90,69,80,000</span>
<span class="t" style="left:597.87px;top:80.60px;font-size:6.5px;line-height:10px;color:#fff;transform:scaleX(0.9666);transform-origin:100% 50%;">3,13,49,90,000</span>
<span class="t" style="left:646.64px;top:80.60px;font-size:6.5px;line-height:10px;color:#fff;transform:scaleX(0.9666);transform-origin:100% 50%;">2,24,02,30,000</span>
<span class="t" style="left:695.41px;top:80.60px;font-size:6.5px;line-height:10px;color:#fff;transform:scaleX(0.9666);transform-origin:100% 50%;">1,70,51,00,000</span>
<span class="t" style="left:744.18px;top:80.60px;font-size:6.5px;line-height:10px;color:#fff;transform:scaleX(0.9666);transform-origin:100% 50%;">1,58,92,40,000</span>
<span class="t" style="left:792.95px;top:80.60px;font-size:6.5px;line-height:10px;color:#fff;transform:scaleX(0.9666);transform-origin:100% 50%;">1,32,17,10,000</span>
<span class="t" style="left:847.14px;top:80.60px;font-size:6.5px;line-height:10px;color:#fff;transform:scaleX(0.9666);transform-origin:100% 50%;">93,56,70,000</span>
<span class="t" style="left:895.91px;top:80.60px;font-size:6.5px;line-height:10px;color:#fff;transform:scaleX(0.9666);transform-origin:100% 50%;">81,45,40,000</span>
<span class="t" style="left:944.68px;top:80.60px;font-size:6.5px;line-height:10px;color:#fff;transform:scaleX(0.9666);transform-origin:100% 50%;">81,45,40,000</span>
<span class="t" style="left:993.45px;top:80.60px;font-size:6.5px;line-height:10px;color:#fff;transform:scaleX(0.9666);transform-origin:100% 50%;">81,45,40,000</span>
</div>
<div class="r" style="left:28px;top:455.7px;width:1004px;height:1.6px;background:#f5f5f5;"></div>
<div class="r" style="left:29.8px;top:455.0px;width:12.2px;height:2.8px;background:#cdcdcd;border-radius:1.4px;"></div>
<span class="t" style="left:21.97px;top:452.20px;font-size:5px;line-height:8px;color:#c4d4dc;">‹</span>
<span class="t" style="left:1042.17px;top:452.20px;font-size:5px;line-height:8px;color:#c4d4dc;">›</span>
</div></body></html>
